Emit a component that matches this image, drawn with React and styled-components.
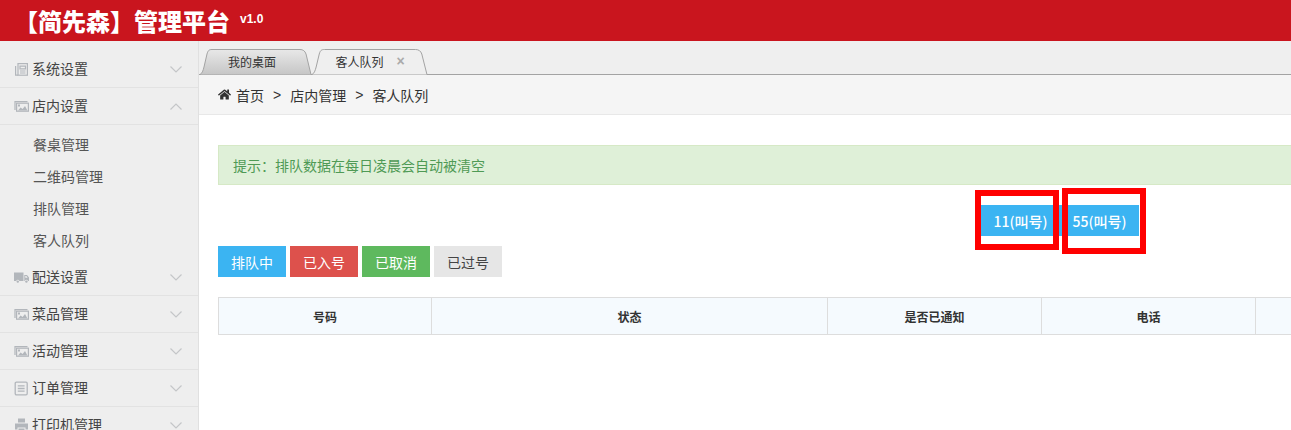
import React from "react";
import styled, { createGlobalStyle } from "styled-components";
import { FaHome } from "react-icons/fa";

const Global = createGlobalStyle`
  html, body { margin: 0; padding: 0; height: 100%; overflow: hidden; background: #fff; }
  body { font-family: "Noto Sans CJK SC", "Liberation Sans", sans-serif; }
  * { box-sizing: border-box; }
`;

const Page = styled.div`
  width: 1291px; height: 430px; overflow: hidden; display: flex; flex-direction: column; position: relative;
`;
const Header = styled.header`
  flex: none; height: 41px; background: #c9151e; color: #fff; display: flex; align-items: center; padding-left: 14px;
`;
const Brand = styled.h1`
  margin: 0; font-size: 24px; line-height: 41px; font-weight: 900; font-family: "Noto Sans CJK SC", sans-serif;
`;
const Version = styled.span`
  margin-left: 10px; font: 700 12px "Liberation Sans", sans-serif; position: relative; top: -2px;
`;
const Body = styled.div`
  flex: 1; display: flex; min-height: 0;
`;
const Sidebar = styled.nav`
  flex: none; width: 199px; background: #eeeeee; border-right: 1px solid #e0e0e0; padding-top: 10px; overflow: hidden;
`;
const MenuRow = styled.div`
  height: 37px; border-bottom: 1px solid #e2e2e2; display: flex; align-items: center; padding: 0 16px 0 14px;
  color: #444; font-size: 14px; flex: none;
  svg.ic { flex: none; width: 15px; height: 15px; color: #b2b6bb; margin-left: ${p => p.$wide ? 0 : 0}px; }
`;
const MenuLabel = styled.span`
  margin-left: 3px; flex: 1; position: relative; top: -1px;
`;
const SubList = styled.div`
  padding: 3px 0 3px;
`;
const SubItem = styled.div`
  height: 32px; line-height: 32px; padding-left: 33px; font-size: 14px; color: #555;
`;
const Main = styled.main`
  flex: 1; min-width: 0; display: flex; flex-direction: column;
`;
const TabBar = styled.div`
  flex: none; height: 34px; background: #efefef; padding: 8px 0 0 1px; display: flex; position: relative;
  &::after { content: ""; position: absolute; left: 0; right: 0; bottom: 0; height: 1px; background: #a3a3a3; }
`;
const Tab = styled.div`
  position: relative; height: 26px; width: ${p => p.$w}px; font-size: 12px; color: #333; display: flex; align-items: center; justify-content: center; padding: 0 ${p => p.$pr || 0}px 2px 0; z-index: ${p => p.$active ? 2 : 1};
  svg.shape { position: absolute; inset: 0; width: 100%; height: 100%; z-index: 0; }
  span { position: relative; z-index: 1; }
`;
const TabClose = styled.span`
  margin-left: 13px; color: #aaa; font: 700 14px "Liberation Sans", sans-serif;
`;
const Crumbs = styled.div`
  flex: none; height: 40px; background: #f5f5f5; border-bottom: 1px solid #e8e8e8; display: flex; align-items: center; padding-left: 19px; font-size: 14px; color: #333;
  svg { width: 13px; height: 13px; margin-right: 5px; color: #333; }
`;
const Sep = styled.span`
  margin: 0 9px; font-family: "Liberation Sans", sans-serif;
`;
const Content = styled.div`
  flex: 1; padding: 30px 0 0 19px; display: flex; flex-direction: column; overflow: hidden;
`;
const Alert = styled.div`
  flex: none; height: 40px; background: #dff0d8; border: 1px solid #d6e9c6; border-right: 0; color: #4f9a55; font-size: 14px; display: flex; align-items: center; padding-left: 14px;
`;
const CallRow = styled.div`
  flex: none; display: flex; margin: 20px 0 0 763px; height: 31px;
`;
const CallButton = styled.button`
  width: 79px; height: 31px; border: 0; padding: 0; background: #3bb4f2; color: #fff; font-size: 14px; font-weight: 500; font-family: inherit;
`;
const Filters = styled.div`
  flex: none; display: flex; gap: 4px; margin-top: 10px;
`;
const FilterButton = styled.button`
  width: 68px; height: 31px; border: 0; padding: 0; background: ${p => p.$bg}; color: ${p => p.$fg || "#fff"}; font-size: 14px; font-family: inherit;
`;
const Table = styled.div`
  flex: none; margin-top: 20px; display: grid; grid-template-columns: 213px 396px 214px 214px 200px; height: 38px; background: #f5fafe; border: 1px solid #dddddd; border-right: 0;
`;
const Th = styled.div`
  border-right: 1px solid #dddddd; display: flex; align-items: center; justify-content: center; font-size: 12px; font-weight: 700; color: #333;
  &:last-child { border-right: 0; }
`;
const Mark = styled.div`
  position: absolute; border: ${p => p.$t}px solid #ff0000; left: ${p => p.$x}px; top: ${p => p.$y}px; width: ${p => p.$w}px; height: ${p => p.$h}px;
`;

const Chevron = ({ up }) => (
  <svg width="12" height="7" viewBox="0 0 12 7" fill="none" stroke="#c4c6c8" strokeWidth="1.2">
    <path d={up ? "M.5 6.5 6 1l5.5 5.5" : "M.5.5 6 6 11.5.5"} />
  </svg>
);
const NewsIcon = () => (
  <svg className="ic" viewBox="0 0 15 15" fill="none" stroke="currentColor" strokeWidth="1.2">
    <rect x="4" y="1.6" width="9.4" height="11.6" />
    <path d="M1.6 4v9.2H4M6 4.2h5.5v2.6H6zM6 9h5.5M6 11h5.5" />
  </svg>
);
const PictureIcon = () => (
  <svg className="ic" viewBox="0 0 15 15" fill="none" stroke="currentColor" strokeWidth="1.2">
    <path d="M1 11V2.6h12.5" />
    <rect x="2.6" y="4.2" width="11.8" height="8" />
    <path fill="currentColor" stroke="none" d="M4 11.4l2.6-3 2 1.6L11 7l2.4 4.4zM4 5.4h2v2H4z" />
  </svg>
);
const TruckIcon = () => (
  <svg className="ic" viewBox="0 0 15 15" fill="currentColor">
    <path d="M0 2.5h9.5v8.5H5.4a1.7 1.7 0 0 0-3.2 0H0z" />
    <path d="M10.3 5H13l2 2.6V11h-1a1.7 1.7 0 0 0-3.2 0h-.5zM11.3 6v1.8h2.3L12.4 6z" fillRule="evenodd" />
    <circle cx="3.8" cy="11.6" r="1.2" /><circle cx="12.4" cy="11.6" r="1.2" />
  </svg>
);
const ListIcon = () => (
  <svg className="ic" viewBox="0 0 15 15" fill="none" stroke="currentColor" strokeWidth="1.3">
    <rect x="1.2" y="1.2" width="12" height="12.6" rx="1.2" />
    <path d="M3.8 4.8h6.8M3.8 7.5h6.8M3.8 10.2h6.8" />
  </svg>
);
const PrinterIcon = () => (
  <svg className="ic" viewBox="0 0 15 15" fill="currentColor">
    <path d="M4 .5h7v4H4z" />
    <path d="M1 5.5h13v6h-2.5V9.5h-8v2H1z" />
    <path d="M4.5 10.5h6v4h-6z" />
  </svg>
);
const TabShape = ({ active }) => (
  <svg className="shape" viewBox="0 0 112 26" preserveAspectRatio="none">
    <defs>
      <linearGradient id="inactiveTab" x1="0" y1="0" x2="0" y2="1">
        <stop offset="0" stopColor="#e8e8e8" /><stop offset="1" stopColor="#c6c6c6" />
      </linearGradient>
    </defs>
    <path d="M0 25.5 C2 24.5 3 22 4 18 L7 5 C8 1.5 9 .5 12 .5 H100 C103 .5 105 2 106 5 L111 25.5" fill={active ? "#efefef" : "url(#inactiveTab)"} stroke="#a3a3a3" vectorEffect="non-scaling-stroke" />
  </svg>
);

const menuTop = [
  ["系统设置", <NewsIcon />],
  ["店内设置", <PictureIcon />, true],
];
const menuBottom = [
  ["配送设置", <TruckIcon />],
  ["菜品管理", <PictureIcon />],
  ["活动管理", <PictureIcon />],
  ["订单管理", <ListIcon />],
  ["打印机管理", <PrinterIcon />],
];
const Row = ({ item }) => (
  <MenuRow>
    {item[1]}
    <MenuLabel>{item[0]}</MenuLabel>
    <Chevron up={item[2]} />
  </MenuRow>
);

export default function App() {
  return (
    <Page>
      <Global />
      <Header>
        <Brand>【简先森】管理平台</Brand>
        <Version>v1.0</Version>
      </Header>
      <Body>
        <Sidebar>
          {menuTop.map(m => <Row key={m[0]} item={m} />)}
          <SubList>
            {["餐桌管理", "二维码管理", "排队管理", "客人队列"].map(s => <SubItem key={s}>{s}</SubItem>)}
          </SubList>
          {menuBottom.map(m => <Row key={m[0]} item={m} />)}
        </Sidebar>
        <Main>
          <TabBar>
            <Tab $w={112} $pr={8}><TabShape /><span>我的桌面</span></Tab>
            <Tab $w={116} $active><TabShape active /><span>客人队列</span><TabClose>×</TabClose></Tab>
          </TabBar>
          <Crumbs>
            <FaHome />首页<Sep>&gt;</Sep>店内管理<Sep>&gt;</Sep>客人队列
          </Crumbs>
          <Content>
            <Alert>提示：排队数据在每日凌晨会自动被清空</Alert>
            <CallRow>
              <CallButton>11(叫号)</CallButton>
              <CallButton>55(叫号)</CallButton>
            </CallRow>
            <Filters>
              <FilterButton $bg="#3bb4f2">排队中</FilterButton>
              <FilterButton $bg="#dd514c">已入号</FilterButton>
              <FilterButton $bg="#5eb95e">已取消</FilterButton>
              <FilterButton $bg="#e6e6e6" $fg="#444">已过号</FilterButton>
            </Filters>
            <Table>
              <Th>号码</Th><Th>状态</Th><Th>是否已通知</Th><Th>电话</Th><Th />
            </Table>
          </Content>
        </Main>
      </Body>
      <Mark $t={6} $x={975} $y={190} $w={84} $h={60} />
      <Mark $t={6} $x={1062} $y={188} $w={84} $h={66} />
    </Page>
  );
}
